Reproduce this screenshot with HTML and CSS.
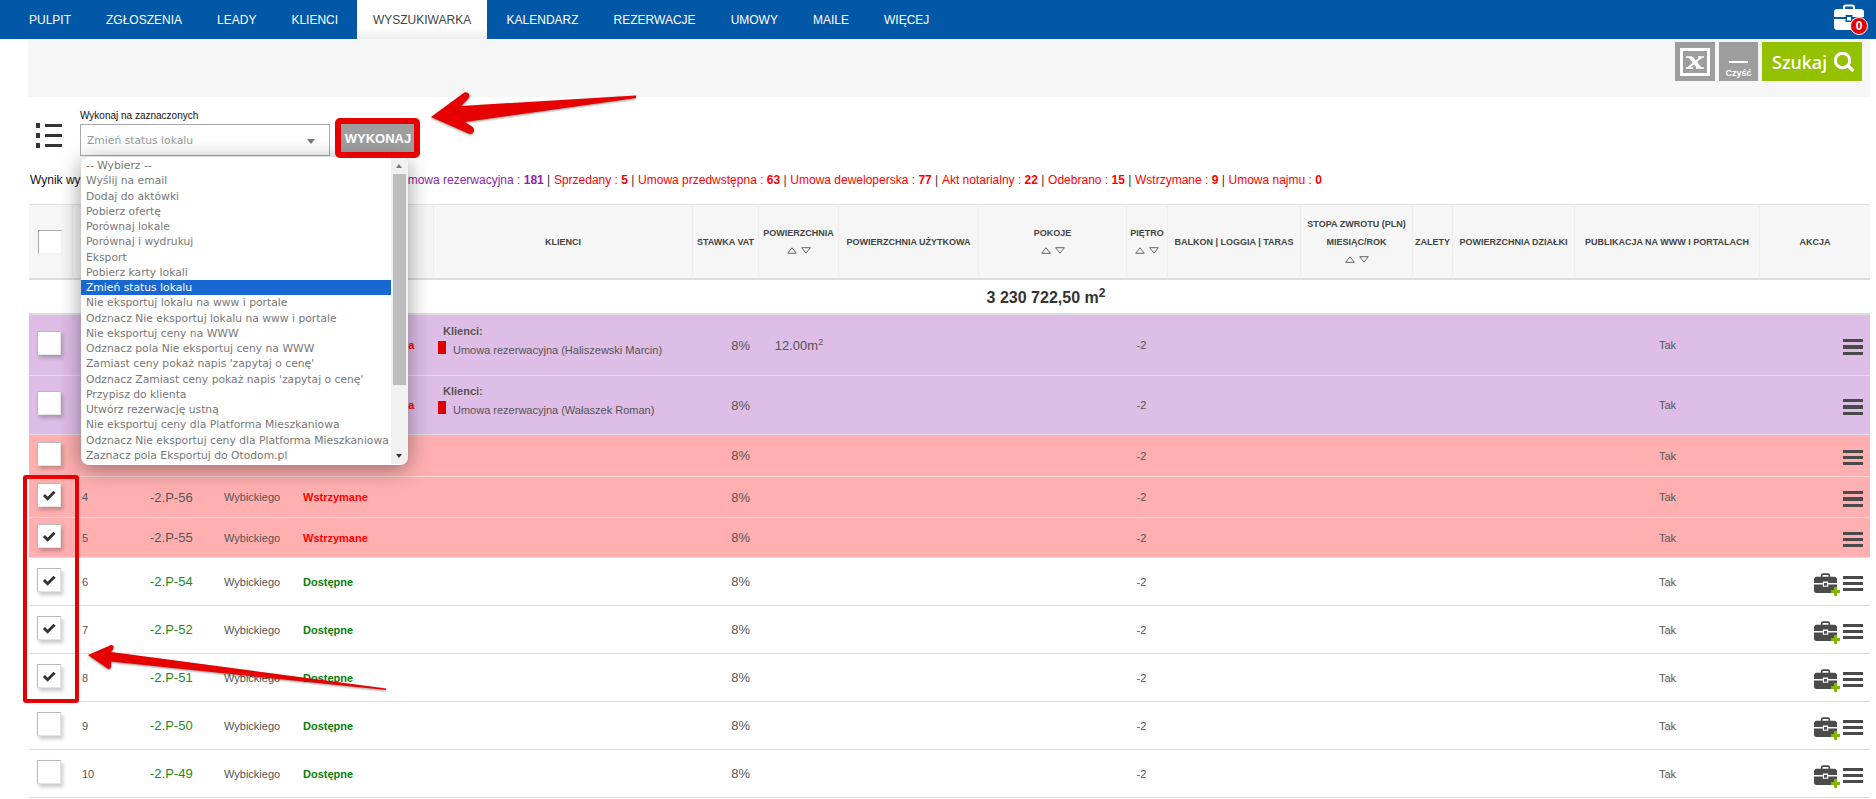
FILE: index.html
```html
<!DOCTYPE html>
<html lang="pl">
<head>
<meta charset="utf-8">
<title>Wyszukiwarka</title>
<link rel="stylesheet" href="styles.css">
</head>
<body>
<svg class="defs" width="0" height="0" aria-hidden="true">
  <symbol id="case" viewBox="0 0 30 26">
    <path d="M10 6V3.5C10 2.5 10.8 1.5 12 1.5H18C19.2 1.5 20 2.5 20 3.5V6" fill="none" stroke="currentColor" stroke-width="2.2"/>
    <path d="M3 5H27C28.5 5 30 6.2 30 8V13H18.5V11H11.5V13H0V8C0 6.2 1.5 5 3 5Z" fill="currentColor"/>
    <path d="M0 15H11.5V18H18.5V15H30V23C30 24.6 28.6 26 27 26H3C1.4 26 0 24.6 0 23Z" fill="currentColor"/>
    <rect x="13" y="13" width="4" height="3.5" fill="currentColor"/>
  </symbol>
  <symbol id="up" viewBox="0 0 10 7"><path d="M5 .8 9.3 6.3H.7Z" fill="none" stroke="#666" stroke-width="1"/></symbol>
  <symbol id="down" viewBox="0 0 10 7"><path d="M5 6.2 9.3 .7H.7Z" fill="none" stroke="#666" stroke-width="1"/></symbol>
  <symbol id="tick" viewBox="0 0 24 24"><path d="M6.5 12 10.5 16 18 8.5" fill="none" stroke="#333" stroke-width="3.2"/></symbol>
</svg>

<nav class="nav">
  <a class="nav-item" href="#">PULPIT</a>
  <a class="nav-item" href="#">ZGŁOSZENIA</a>
  <a class="nav-item" href="#">LEADY</a>
  <a class="nav-item" href="#">KLIENCI</a>
  <a class="nav-item active" href="#">WYSZUKIWARKA</a>
  <a class="nav-item" href="#">KALENDARZ</a>
  <a class="nav-item" href="#">REZERWACJE</a>
  <a class="nav-item" href="#">UMOWY</a>
  <a class="nav-item" href="#">MAILE</a>
  <a class="nav-item" href="#">WIĘCEJ</a>
  <div class="nav-case">
    <svg class="nav-case-icon"><use href="#case"/></svg>
    <span class="badge">0</span>
  </div>
</nav>

<main class="main">
  <section class="panel">
    <button class="btn-grey btn-excel" aria-label="Eksport">
      <svg width="30" height="28" viewBox="0 0 30 28">
        <rect x="1.5" y="1.5" width="27" height="25" fill="none" stroke="#fff" stroke-width="3"/>
        <path d="M8 9H13L22 20H17Z" fill="#fff"/>
        <path d="M21.5 9 8 20" stroke="#fff" stroke-width="2"/>
        <path d="M6 9H12M18 9H24M6 20H13M16 20H24" stroke="#fff" stroke-width="1.4"/>
      </svg>
    </button>
    <button class="btn-grey btn-clear"><span class="clear-line"></span><span class="clear-text">Czyść</span></button>
    <button class="btn-search">Szukaj
      <svg width="22" height="20" viewBox="0 0 22 20"><circle cx="9.5" cy="8.5" r="7.2" fill="none" stroke="#fff" stroke-width="3"/><path d="M14.5 13.5 20.5 19" stroke="#fff" stroke-width="3.4"/></svg>
    </button>
  </section>

  <section class="toolbar">
    <div class="list-icon" aria-hidden="true">
      <div class="list-row"><i></i><b></b></div>
      <div class="list-row"><i></i><b></b></div>
      <div class="list-row"><i></i><b></b></div>
    </div>
    <div class="field">
      <label class="field-label">Wykonaj na zaznaczonych</label>
      <div class="select"><span>Zmień status lokalu</span><i class="select-arrow"></i></div>
      <div class="menu">
        <div class="menu-list">
          <div class="opt">-- Wybierz --</div>
          <div class="opt">Wyślij na email</div>
          <div class="opt">Dodaj do aktówki</div>
          <div class="opt">Pobierz ofertę</div>
          <div class="opt">Porównaj lokale</div>
          <div class="opt">Porównaj i wydrukuj</div>
          <div class="opt">Eksport</div>
          <div class="opt">Pobierz karty lokali</div>
          <div class="opt opt-on">Zmień status lokalu</div>
          <div class="opt">Nie eksportuj lokalu na www i portale</div>
          <div class="opt">Odznacz Nie eksportuj lokalu na www i portale</div>
          <div class="opt">Nie eksportuj ceny na WWW</div>
          <div class="opt">Odznacz pola Nie eksportuj ceny na WWW</div>
          <div class="opt">Zamiast ceny pokaż napis 'zapytaj o cenę'</div>
          <div class="opt">Odznacz Zamiast ceny pokaż napis 'zapytaj o cenę'</div>
          <div class="opt">Przypisz do klienta</div>
          <div class="opt">Utwórz rezerwację ustną</div>
          <div class="opt">Nie eksportuj ceny dla Platforma Mieszkaniowa</div>
          <div class="opt">Odznacz Nie eksportuj ceny dla Platforma Mieszkaniowa</div>
          <div class="opt">Zaznacz pola Eksportuj do Otodom.pl</div>
        </div>
        <div class="scroll">
          <i class="scroll-up"></i>
          <div class="scroll-thumb"></div>
          <i class="scroll-down"></i>
        </div>
      </div>
    </div>
    <button class="btn-run">WYKONAJ</button>
  </section>

  <p class="summary"><span class="summary-lead">Wynik wyszukiwania</span><span class="s-purple">Umowa rezerwacyjna : <b>181</b></span> | <span class="s-red">Sprzedany : <b>5</b></span> | <span class="s-red">Umowa przedwstępna : <b>63</b></span> | <span class="s-red">Umowa deweloperska : <b>77</b></span> | <span class="s-red">Akt notarialny : <b>22</b></span> | <span class="s-red">Odebrano : <b>15</b></span> | <span class="s-red">Wstrzymane : <b>9</b></span> | <span class="s-red">Umowa najmu : <b>0</b></span></p>

  <table class="grid">
    <colgroup>
      <col class="c44"><col class="c68"><col class="c74"><col class="c79"><col class="c140"><col class="c259"><col class="c66"><col class="c80"><col class="c140"><col class="c148"><col class="c41"><col class="c133"><col class="c112"><col class="c40"><col class="c122"><col class="c185"><col class="c110">
    </colgroup>
    <thead>
      <tr>
        <th class="th-check"><span class="box box-head"></span></th>
        <th colspan="4"></th>
        <th>KLIENCI</th>
        <th>STAWKA VAT</th>
        <th>POWIERZCHNIA<br><span class="sort"><svg><use href="#up"/></svg><svg><use href="#down"/></svg></span></th>
        <th class="th-low">POWIERZCHNIA UŻYTKOWA</th>
        <th>POKOJE<br><span class="sort"><svg><use href="#up"/></svg><svg><use href="#down"/></svg></span></th>
        <th>PIĘTRO<br><span class="sort"><svg><use href="#up"/></svg><svg><use href="#down"/></svg></span></th>
        <th>BALKON | LOGGIA | TARAS</th>
        <th>STOPA ZWROTU (PLN)<br>MIESIĄC/ROK<br><span class="sort"><svg><use href="#up"/></svg><svg><use href="#down"/></svg></span></th>
        <th>ZALETY</th>
        <th>POWIERZCHNIA DZIAŁKI</th>
        <th>PUBLIKACJA NA WWW I PORTALACH</th>
        <th>AKCJA</th>
      </tr>
    </thead>
    <tbody>
      <tr class="r-total">
        <td colspan="9"></td>
        <td class="total">3 230 722,50 m<sup>2</sup></td>
        <td colspan="7"></td>
      </tr>

      <tr class="r-purple h61">
        <td class="td-check"><span class="box"></span></td>
        <td>1</td><td class="nr">-2.P-59</td><td>Wybickiego</td><td class="st-red">Umowa rezerwacyjna</td>
        <td class="clients"><div class="c-title">Klienci:</div><div class="c-line"><i class="c-mark"></i>Umowa rezerwacyjna (Haliszewski Marcin)</div></td>
        <td class="vat">8%</td><td class="area">12.00m<sup>2</sup></td><td></td><td></td><td class="floor">-2</td><td></td><td></td><td></td><td></td><td class="pub">Tak</td>
        <td><div class="acts"><span class="burger"><i></i><i></i><i></i></span></div></td>
      </tr>
      <tr class="r-purple h59">
        <td class="td-check"><span class="box"></span></td>
        <td>2</td><td class="nr">-2.P-58</td><td>Wybickiego</td><td class="st-red">Umowa rezerwacyjna</td>
        <td class="clients"><div class="c-title">Klienci:</div><div class="c-line"><i class="c-mark"></i>Umowa rezerwacyjna (Wałaszek Roman)</div></td>
        <td class="vat">8%</td><td></td><td></td><td></td><td class="floor">-2</td><td></td><td></td><td></td><td></td><td class="pub">Tak</td>
        <td><div class="acts"><span class="burger"><i></i><i></i><i></i></span></div></td>
      </tr>
      <tr class="r-pink h42">
        <td class="td-check"><span class="box"></span></td>
        <td>3</td><td class="nr">-2.P-57</td><td>Wybickiego</td><td class="st-red">Wstrzymane</td>
        <td></td><td class="vat">8%</td><td></td><td></td><td></td><td class="floor">-2</td><td></td><td></td><td></td><td></td><td class="pub">Tak</td>
        <td><div class="acts"><span class="burger"><i></i><i></i><i></i></span></div></td>
      </tr>
      <tr class="r-pink h41">
        <td class="td-check"><span class="box"><svg><use href="#tick"/></svg></span></td>
        <td>4</td><td class="nr">-2.P-56</td><td>Wybickiego</td><td class="st-red">Wstrzymane</td>
        <td></td><td class="vat">8%</td><td></td><td></td><td></td><td class="floor">-2</td><td></td><td></td><td></td><td></td><td class="pub">Tak</td>
        <td><div class="acts"><span class="burger"><i></i><i></i><i></i></span></div></td>
      </tr>
      <tr class="r-pink h40">
        <td class="td-check"><span class="box"><svg><use href="#tick"/></svg></span></td>
        <td>5</td><td class="nr">-2.P-55</td><td>Wybickiego</td><td class="st-red">Wstrzymane</td>
        <td></td><td class="vat">8%</td><td></td><td></td><td></td><td class="floor">-2</td><td></td><td></td><td></td><td></td><td class="pub">Tak</td>
        <td><div class="acts"><span class="burger"><i></i><i></i><i></i></span></div></td>
      </tr>
      <tr class="r-white h48">
        <td class="td-check"><span class="box"><svg><use href="#tick"/></svg></span></td>
        <td>6</td><td class="nr nr-ok">-2.P-54</td><td>Wybickiego</td><td class="st-ok">Dostępne</td>
        <td></td><td class="vat">8%</td><td></td><td></td><td></td><td class="floor">-2</td><td></td><td></td><td></td><td></td><td class="pub">Tak</td>
        <td><div class="acts"><span class="add"><svg class="case"><use href="#case"/></svg><i class="plus"></i></span><span class="burger"><i></i><i></i><i></i></span></div></td>
      </tr>
      <tr class="r-white h48">
        <td class="td-check"><span class="box"><svg><use href="#tick"/></svg></span></td>
        <td>7</td><td class="nr nr-ok">-2.P-52</td><td>Wybickiego</td><td class="st-ok">Dostępne</td>
        <td></td><td class="vat">8%</td><td></td><td></td><td></td><td class="floor">-2</td><td></td><td></td><td></td><td></td><td class="pub">Tak</td>
        <td><div class="acts"><span class="add"><svg class="case"><use href="#case"/></svg><i class="plus"></i></span><span class="burger"><i></i><i></i><i></i></span></div></td>
      </tr>
      <tr class="r-white h48">
        <td class="td-check"><span class="box"><svg><use href="#tick"/></svg></span></td>
        <td>8</td><td class="nr nr-ok">-2.P-51</td><td>Wybickiego</td><td class="st-ok">Dostępne</td>
        <td></td><td class="vat">8%</td><td></td><td></td><td></td><td class="floor">-2</td><td></td><td></td><td></td><td></td><td class="pub">Tak</td>
        <td><div class="acts"><span class="add"><svg class="case"><use href="#case"/></svg><i class="plus"></i></span><span class="burger"><i></i><i></i><i></i></span></div></td>
      </tr>
      <tr class="r-white h48">
        <td class="td-check"><span class="box"></span></td>
        <td>9</td><td class="nr nr-ok">-2.P-50</td><td>Wybickiego</td><td class="st-ok">Dostępne</td>
        <td></td><td class="vat">8%</td><td></td><td></td><td></td><td class="floor">-2</td><td></td><td></td><td></td><td></td><td class="pub">Tak</td>
        <td><div class="acts"><span class="add"><svg class="case"><use href="#case"/></svg><i class="plus"></i></span><span class="burger"><i></i><i></i><i></i></span></div></td>
      </tr>
      <tr class="r-white h48">
        <td class="td-check"><span class="box"></span></td>
        <td>10</td><td class="nr nr-ok">-2.P-49</td><td>Wybickiego</td><td class="st-ok">Dostępne</td>
        <td></td><td class="vat">8%</td><td></td><td></td><td></td><td class="floor">-2</td><td></td><td></td><td></td><td></td><td class="pub">Tak</td>
        <td><div class="acts"><span class="add"><svg class="case"><use href="#case"/></svg><i class="plus"></i></span><span class="burger"><i></i><i></i><i></i></span></div></td>
      </tr>
    </tbody>
  </table>
</main>

<svg class="marks" width="1876" height="799" viewBox="0 0 1876 799" aria-hidden="true">
  <rect class="mark-box mark-box-thick" x="338" y="121" width="79" height="34" rx="2"/>
  <rect class="mark-box" x="25" y="477" width="52" height="224" rx="1"/>
  <path class="mark-arrow" d="M431 117 463 93.5C465.5 91.5 468 92 469 94.5 470 96.500 469 98 467.500 99.500L461 106 636 95.500 636 98 465 122 472 126.500C474 128 474.500 130 473.500 132 472.500 134 470.500 134.500 468.500 133.500Z"/>
  <path class="mark-arrow" d="M88 655 110 645.500C112 644.500 113.500 645.500 113.500 647 113.500 648.500 113 649.500 111 652L386 688.500 386 690 111 661.500 111 667C110.500 669 109 669.500 107.500 668.500Z"/>
</svg>
</body>
</html>
```
FILE: styles.css
```css
* { box-sizing: border-box; }
html, body { margin: 0; padding: 0; }
body {
  position: relative;
  width: 1876px;
  height: 799px;
  overflow: hidden;
  background: #fff;
  font-family: "Liberation Sans", Arial, sans-serif;
  font-size: 11px;
  color: #555;
}
.defs { position: absolute; }

/* top navigation */
.nav {
  display: flex;
  align-items: stretch;
  height: 39px;
  padding: 0 12px 0 11.5px;
  background: #0258a6;
}
.nav-item {
  display: flex;
  align-items: center;
  padding: 0 17.500px;
  color: #fff;
  font-size: 12px;
  text-decoration: none;
}
.nav-item.active {
  justify-content: center;
  width: 130px;
  padding: 0;
  margin: 0 2px 0 1.500px;
  background: linear-gradient(#fff 70%, #ececec);
  color: #444;
}
.nav-case { position: relative; width: 30px; margin-left: auto; padding-top: 4px; }
.nav-case-icon { display: block; width: 30px; height: 26px; color: #fff; }
.badge {
  position: absolute;
  top: 17px;
  right: -4px;
  width: 18px;
  height: 18px;
  border: 1px solid #fff;
  border-radius: 50%;
  background: #e60000;
  color: #fff;
  font-size: 12px;
  font-weight: 700;
  line-height: 16px;
  text-align: center;
}

.main { padding: 0 6px 0 28px; }

/* search panel */
.panel {
  display: flex;
  justify-content: flex-end;
  gap: 4px;
  height: 58px;
  padding: 3px 8px 0 0;
  background: #f6f6f6;
}
.panel button { border: 0; padding: 0; height: 39px; color: #fff; }
.btn-grey { background: #9e9e9e; width: 39px; display: flex; flex-direction: column; align-items: center; }
.btn-excel { width: 40px; justify-content: center; }
.clear-line { width: 19px; height: 2px; margin-top: 19px; background: #fff; }
.clear-text { margin-top: 5px; font-size: 9px; font-weight: 700; color: #fff; }
.btn-search {
  display: flex;
  align-items: center;
  gap: 6px;
  width: 100px;
  padding-left: 10px !important;
  background: #94c100;
  font-family: "Noto Sans", sans-serif;
  font-size: 18px;
  font-weight: 500;
}

/* action toolbar */
.toolbar { display: flex; align-items: flex-start; height: 59px; padding: 12px 0 0 8px; }
.list-icon { display: flex; flex-direction: column; gap: 6.500px; width: 26px; margin: 14.500px 18px 0 0; }
.list-row { display: flex; align-items: center; gap: 5px; height: 3.500px; }
.list-row i { width: 4px; height: 5px; background: #333; flex: none; }
.list-row b { flex: 1; height: 2.500px; background: #333; }
.field { position: relative; width: 250px; }
.field-label { display: block; height: 13px; margin-bottom: 2px; color: #111; font-size: 10px; line-height: 13px; }
.select {
  position: relative;
  height: 32px;
  padding-left: 6px;
  border: 1px solid #aaa;
  background: #fff;
  color: #999;
  font-family: "DejaVu Sans", sans-serif;
  font-size: 10.750px;
  line-height: 32px;
}
.select-arrow {
  position: absolute;
  top: 14px;
  right: 14px;
  border: 4px solid transparent;
  border-top: 5px solid #777;
  border-bottom: 0;
}
.btn-run {
  width: 74px;
  height: 28px;
  margin: 15px 0 0 11px;
  padding: 0;
  border: 0;
  background: #9e9e9e;
  color: #fff;
  font-family: "Liberation Sans", sans-serif;
  font-size: 13px;
  font-weight: 700;
}

/* open dropdown */
.menu {
  position: absolute;
  z-index: 5;
  top: 48px;
  left: 1px;
  display: flex;
  width: 327px;
  height: 308px;
  padding: 1px 0;
  border-radius: 8px;
  background: #fff;
  box-shadow: 0 4px 22px rgba(0, 0, 0, .4);
  overflow: hidden;
}
.menu-list { flex: 1; }
.opt {
  height: 15.250px;
  padding-left: 5px;
  color: #777;
  font-family: "DejaVu Sans", sans-serif;
  font-size: 10.750px;
  line-height: 15px;
  white-space: nowrap;
}
.opt-on { background: #1967d2; color: #fff; }
.scroll { position: relative; width: 17px; background: #f1f1f1; }
.scroll-thumb { position: absolute; top: 16px; left: 2px; width: 13px; height: 211px; background: #bdbdbd; }
.scroll-up, .scroll-down { position: absolute; left: 5px; border: 3.500px solid transparent; }
.scroll-up { top: 6px; border-bottom: 4px solid #777; border-top: 0; }
.scroll-down { bottom: 6px; border-top: 4px solid #333; border-bottom: 0; }

/* summary */
.summary { height: 16px; margin: 16px 0; padding-left: 2px; color: #333; font-size: 12px; line-height: 16px; white-space: nowrap; }
.summary-lead { display: inline-block; width: 369px; color: #111; }
.s-purple { color: #8e24aa; }
.s-red { color: #f00; margin-left: .35px; }

/* table */
.grid { width: 1841px; margin-left: 1px; table-layout: fixed; border-collapse: separate; border-spacing: 0; }
.c44 { width: 44px; } .c68 { width: 68px; } .c74 { width: 74px; } .c79 { width: 79px; }
.c140 { width: 140px; } .c259 { width: 259px; } .c66 { width: 66px; } .c80 { width: 80px; }
.c148 { width: 148px; } .c41 { width: 41px; } .c133 { width: 133px; } .c112 { width: 112px; }
.c40 { width: 40px; } .c122 { width: 122px; } .c185 { width: 185px; } .c110 { width: 110px; }
.grid th {
  height: 76px;
  padding: 0;
  border-top: 1px solid #ddd;
  border-bottom: 2px solid #ddd;
  border-right: 1px solid #eee;
  background: #f6f6f6;
  color: #444;
  font-size: 9px;
  font-weight: 700;
  line-height: 18px;
  text-align: center;
}
.grid th:last-child { border-right: 0; }
.th-check { text-align: left !important; padding-left: 9px !important; }
.sort { display: inline-flex; gap: 4px; height: 18px; align-items: center; vertical-align: top; }
.sort svg { width: 10px; height: 7px; }
.grid td {
  padding: 0 0 0 9px;
  border-bottom: 1px solid #ddd;
  color: #555;
  font-size: 11px;
  white-space: nowrap;
  vertical-align: middle;
}
.r-total td { height: 35px; padding: 0; border-bottom: 2px solid #ddd; }
.grid .total { padding-right: 14px; color: #333; font-size: 16px; font-weight: 700; text-align: center; }
.total sup { font-size: 12px; }
.h61 td { height: 61px; } .h59 td { height: 59px; } .h42 td { height: 42px; }
.h41 td { height: 41px; } .h40 td { height: 40px; } .h48 td { height: 48px; }
.r-purple td { background: #debde6; border-bottom-color: #e6dbe8; }
.r-pink td { background: #ffafaf; border-bottom-color: #f5d5d5; }
.r-white td { background: #fff; }
.grid .td-check { padding: 0 0 4px 8px; }
.box {
  display: block;
  width: 24px;
  height: 24px;
  border: 1px solid #ccc;
  border-color: #bbb #e4e4e4 #e4e4e4 #bbb;
  background: #fff;
  box-shadow: 2px 3px 4px rgba(0, 0, 0, .22);
}
.box svg { display: block; width: 22px; height: 22px; }
.box-head { box-shadow: none; border-color: #aaa #f3f3f3 #f3f3f3 #aaa; }
.grid .nr { color: #555; font-size: 13px; }
.grid .nr-ok { color: #1d8a1d; }
.grid .st-red { color: #f00; font-weight: 700; }
.grid .st-ok { color: #0a7d0a; font-weight: 700; }
.grid .clients { padding-bottom: 10px; }
.c-title { font-weight: 700; line-height: 14px; margin-bottom: 5px; }
.c-line { display: flex; align-items: center; gap: 7px; margin-left: -5px; line-height: 14px; }
.c-mark { width: 8px; height: 13px; background: #e00000; flex: none; margin-top: -4px; }
.grid .vat { padding: 0 9px 0 0; font-size: 13px; text-align: right; }
.grid .area { padding: 0; font-size: 13px; text-align: center; }
.area sup { font-size: 9px; }
.grid .floor { padding: 0 12px 0 0; text-align: center; }
.grid .pub { padding: 0; text-align: center; }
.acts { display: flex; align-items: center; justify-content: flex-end; gap: 6px; margin-right: 7px; padding-top: 4px; }
.burger { display: flex; flex-direction: column; gap: 3.200px; width: 20px; }
.burger i { height: 3.200px; background: #4a4a4a; }
.add { position: relative; display: block; width: 23px; height: 22px; }
.case { display: block; width: 23px; height: 20px; color: #4a4a4a; }
.plus {
  position: absolute;
  right: -3px;
  bottom: -1px;
  width: 9px;
  height: 9px;
  background:
    linear-gradient(#7fb800, #7fb800) center / 9px 3px no-repeat,
    linear-gradient(#7fb800, #7fb800) center / 3px 9px no-repeat;
}

/* annotations painted over the screenshot */
.marks { position: absolute; z-index: 10; top: 0; left: 0; pointer-events: none; }
.mark-box { fill: none; stroke: #e60000; stroke-width: 4; }
.mark-box-thick { stroke-width: 6; }
.mark-arrow { fill: #e60000; filter: drop-shadow(0 1px 1px rgba(0, 0, 0, .45)); }
```
